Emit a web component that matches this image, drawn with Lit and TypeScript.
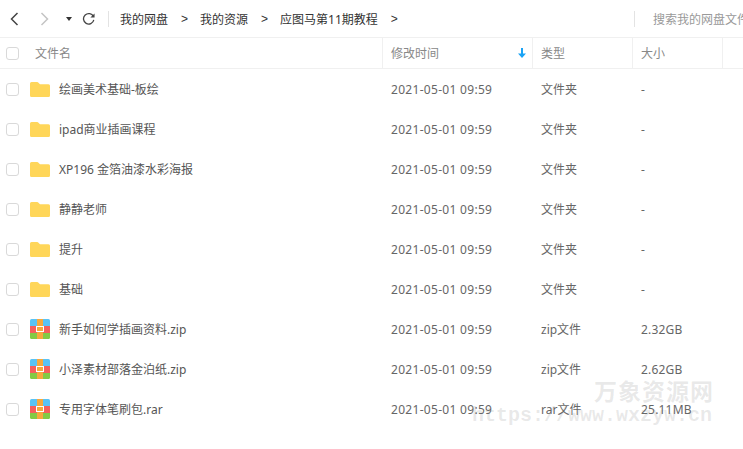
import { LitElement, html, css, svg } from "lit";
import { customElement } from "lit/decorators.js";

const rows = [
  ["绘画美术基础-板绘", "文件夹", "-", "d"],
  ["ipad商业插画课程", "文件夹", "-", "d"],
  ["XP196 金箔油漆水彩海报", "文件夹", "-", "d"],
  ["静静老师", "文件夹", "-", "d"],
  ["提升", "文件夹", "-", "d"],
  ["基础", "文件夹", "-", "d"],
  ["新手如何学插画资料.zip", "zip文件", "2.32GB", "z"],
  ["小泽素材部落金泊纸.zip", "zip文件", "2.62GB", "z"],
  ["专用字体笔刷包.rar", "rar文件", "25.11MB", "z"],
];

const folder = svg`<svg width="20" height="15" viewBox="0 0 20 15"><path d="M1.500 0H7c.8 0 1.200.3 1.700.9L10 2.300h8.500A1.500 1.500 0 0 1 20 3.800V13.500A1.500 1.500 0 0 1 18.500 15H1.500A1.500 1.500 0 0 1 0 13.500V1.500A1.500 1.500 0 0 1 1.500 0z" fill="#ffd659"/></svg>`;
const zip = svg`<svg width="20" height="20" viewBox="0 0 20 20"><defs><clipPath id="zc"><rect width="20" height="20" rx="1.500"/></clipPath></defs><g clip-path="url(#zc)"><rect width="20" height="7" fill="#5ac3f5"/><rect y="7" width="20" height="7" fill="#f7605c"/><rect y="14" width="20" height="6" fill="#84cb45"/><rect x="7" width="6" height="20" fill="#f8a93c"/><rect x="6" y="7" width="8" height="6" fill="#fff"/><rect x="7" y="8" width="6" height="4" fill="#f8a93c"/></g></svg>`;

@customElement("app-root")
export class AppRoot extends LitElement {
  static styles = css`
    :host { display: block; width: 743px; height: 449px; overflow: hidden; position: relative; background: #fff;
      font-family: "Noto Sans", "Noto Sans CJK SC", sans-serif; font-size: 12px; color: #666; }
    .top { display: flex; align-items: center; height: 38px; box-sizing: border-box; border-bottom: 1px solid #f0f0f0; }
    .nav { display: flex; align-items: center; width: 108px; height: 38px; flex: none; }
    .nav svg { display: block; flex: none; }
    .back { margin-left: 9px; }
    .fwd { margin-left: 19px; }
    .caret { margin-left: 16px; }
    .ref { margin-left: 10px; }
    .sep { width: 1px; height: 16px; background: #e3e3e3; flex: none; }
    .crumbs { display: flex; align-items: center; color: #333; margin-left: 11px; flex: none; width: 514px; white-space: nowrap; }
    .crumbs i { font-style: normal; font-family: "Liberation Sans", sans-serif; margin: 0 12px 0 13px; }
    .search { margin-left: 18px; color: #999; white-space: nowrap; }
    .head { display: flex; height: 31px; box-sizing: border-box; border-bottom: 1px solid #f0f0f0; color: #888; align-items: stretch; }
    .h { display: flex; align-items: center; box-sizing: border-box; border-right: 1px solid #f0f0f0; flex: none; }
    .h1 { width: 383px; }
    .h2 { width: 150px; padding-left: 8px; justify-content: space-between; padding-right: 6px; }
    .h3 { width: 100px; padding-left: 8px; }
    .h4 { width: 90px; padding-left: 8px; }
    .cb { width: 11px; height: 11px; margin-left: 6px; border: 1px solid #d9d9d9; border-radius: 3px; flex: none; }
    .h1 .name { margin-left: 16px; }
    .row { display: flex; height: 40px; align-items: center; white-space: nowrap; }
    .ico { width: 20px; margin-left: 11px; display: flex; align-items: center; flex: none; }
    .fn { color: #555; width: 332px; margin-left: 9px; flex: none; }
    .time { width: 150px; flex: none; letter-spacing: .3px; }
    .type { width: 100px; flex: none; }
    .size { letter-spacing: .2px; }
    .mark { position: absolute; pointer-events: none; color: rgba(120,120,120,.17); white-space: nowrap; }
    .wm1 { left: 594px; top: 373px; font-size: 23px; letter-spacing: 1px; font-weight: 700; }
    .wm2 { left: 472px; top: 404px; font-family: "Liberation Mono", monospace; font-size: 20px; font-weight: 700; }
  `;

  render() {
    return html`
      <div class="top">
        <div class="nav">
          <svg class="back" width="11" height="14" viewBox="0 0 11 14"><path d="M8.500 1L2.500 7l6 6" fill="none" stroke="#444" stroke-width="1.500"/></svg>
          <svg class="fwd" width="11" height="14" viewBox="0 0 11 14"><path d="M2.500 1l6 6-6 6" fill="none" stroke="#c4c4c4" stroke-width="1.500"/></svg>
          <svg class="caret" width="6" height="4" viewBox="0 0 6 4"><path d="M0 0h6L3 4z" fill="#333"/></svg>
          <svg class="ref" width="13" height="13" viewBox="0 0 14 14"><path d="M12.300 5A5.600 5.600 0 1 0 12.700 8.500" fill="none" stroke="#444" stroke-width="1.400"/><path d="M13.500 1.500V6H9z" fill="#444"/></svg>
        </div>
        <div class="sep"></div>
        <div class="crumbs">我的网盘<i>&gt;</i>我的资源<i>&gt;</i>应图马第11期教程<i>&gt;</i></div>
        <div class="sep"></div>
        <div class="search">搜索我的网盘文件</div>
      </div>
      <div class="head">
        <div class="h h1"><span class="cb"></span><span class="name">文件名</span></div>
        <div class="h h2"><span>修改时间</span>
          <svg width="8" height="10" viewBox="0 0 8 10"><path d="M3 0h2v5.500h3L4 10 0 5.500h3z" fill="#1aa3f5"/></svg></div>
        <div class="h h3">类型</div>
        <div class="h h4">大小</div>
      </div>
      ${rows.map(
        (r) => html`<div class="row">
          <span class="cb"></span>
          <span class="ico">${r[3] === "d" ? folder : zip}</span>
          <span class="fn">${r[0]}</span>
          <span class="time">2021-05-01 09:59</span>
          <span class="type">${r[1]}</span>
          <span class="size">${r[2]}</span>
        </div>`
      )}
      <div class="mark wm1">万象资源网</div>
      <div class="mark wm2">https://www.wxzyw.cn</div>
    `;
  }
}
